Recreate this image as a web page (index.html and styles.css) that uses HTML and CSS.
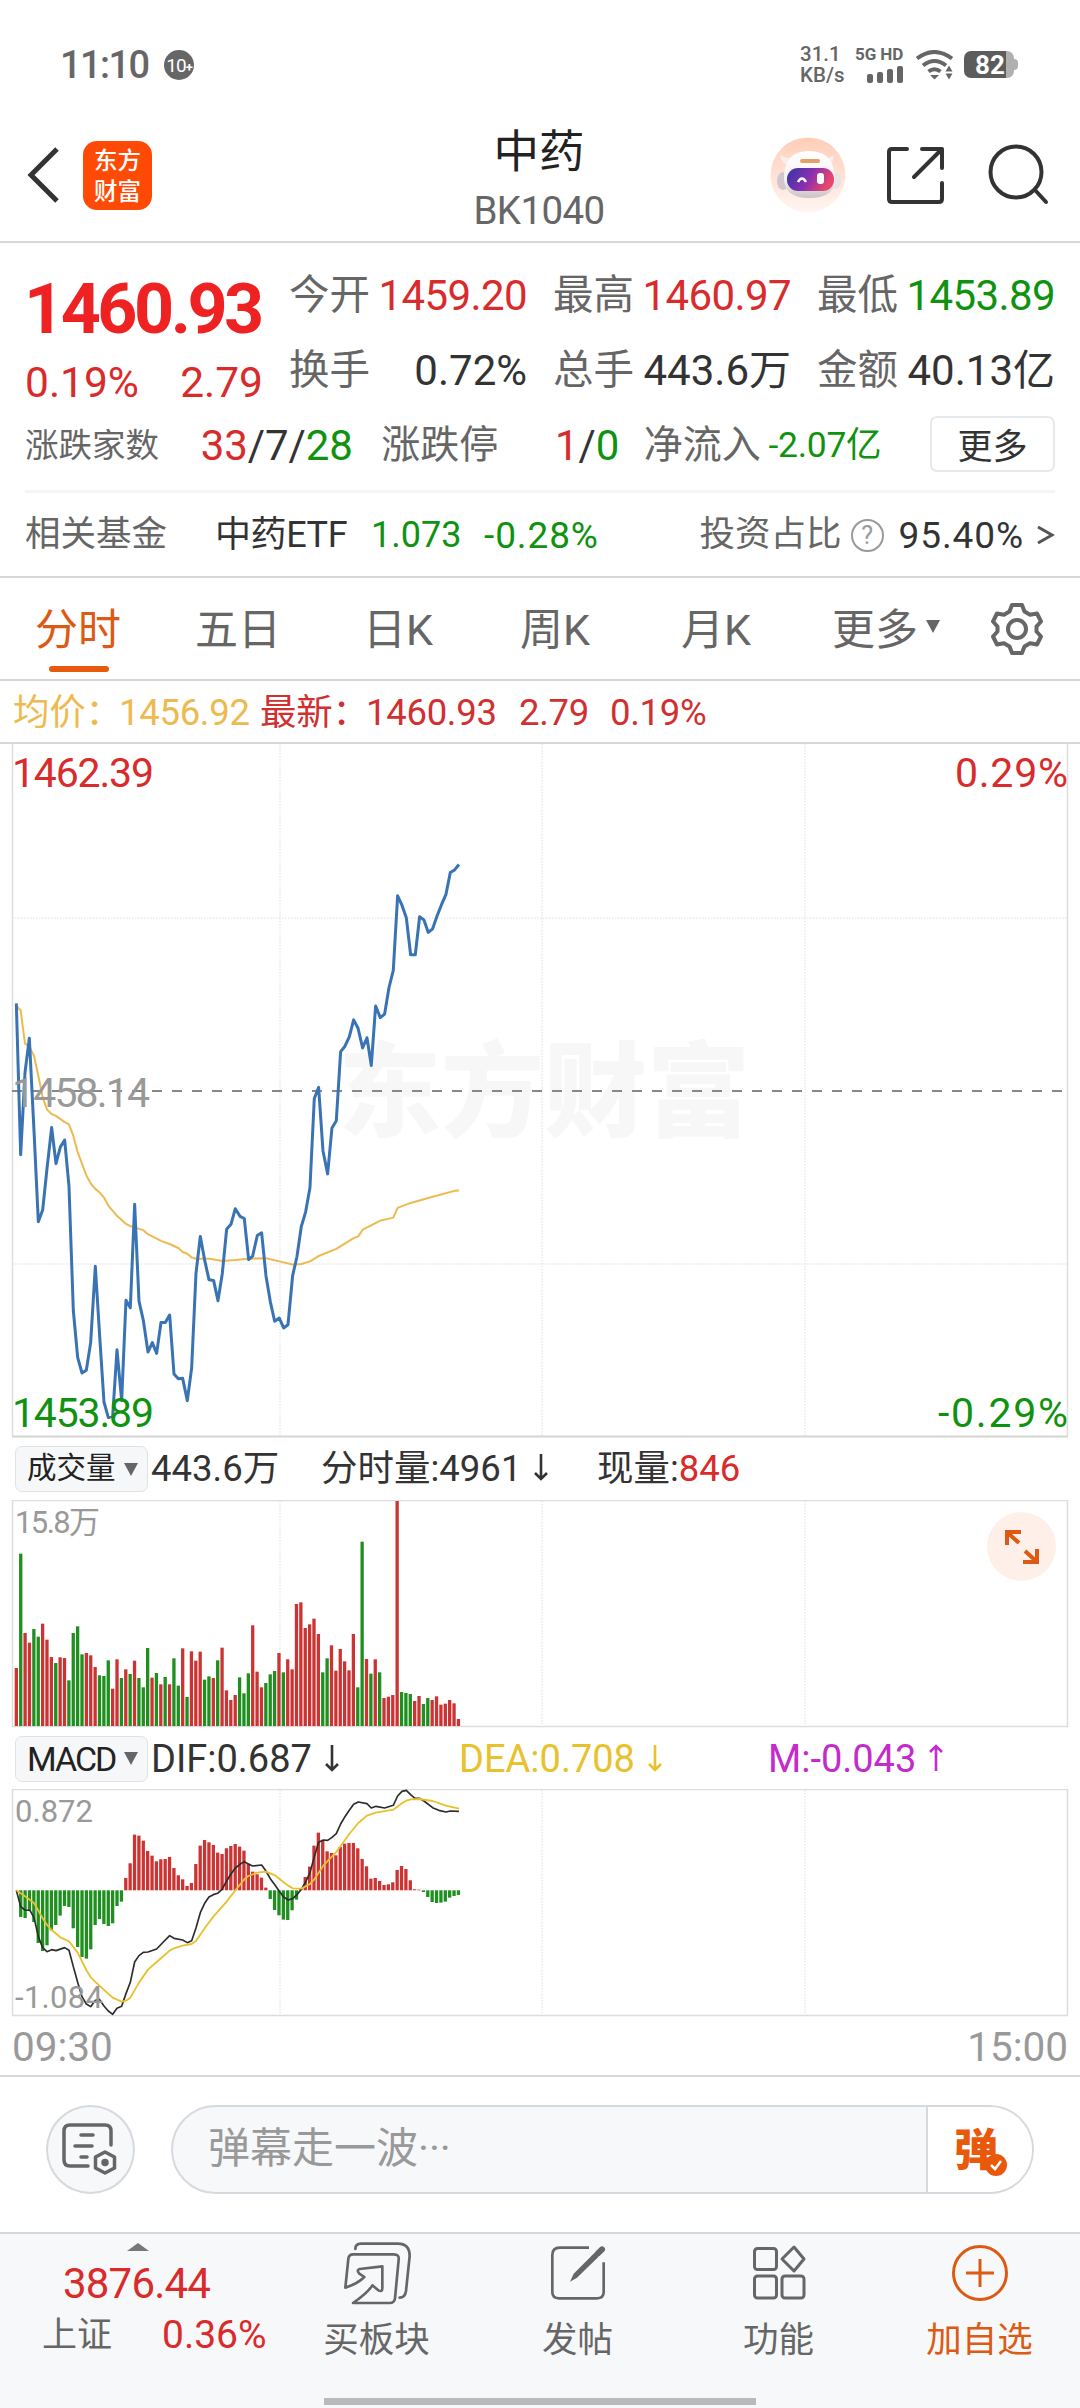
FILE: index.html
```html
<!DOCTYPE html>
<html lang="zh-CN">
<head>
  <meta charset="UTF-8" />
  <meta name="viewport" content="width=device-width, initial-scale=1.0" />
  <title>中药 BK1040</title>
  <link rel="stylesheet" href="styles.css">
</head>
<body>
  <div class="status-bar">
    <span class="clock">11:10</span>
    <span class="notice">10<i>+</i></span>
    <div class="net-speed"><span>31.1</span><span>KB/s</span></div>
    <div class="signal">
      <span>5G HD</span>
      <svg width="36" height="17" fill="#666"><rect x="0" y="8" width="6" height="9" rx="2"/><rect x="10" y="6" width="6" height="11" rx="2"/><rect x="20" y="3" width="6" height="14" rx="2"/><rect x="30" y="0" width="6" height="17" rx="2"/></svg>
    </div>
    <svg class="wifi" width="38" height="30" viewBox="0 0 38 30" fill="none" stroke="#666" stroke-width="4">
      <path d="M1 8.500Q18.500 -4.500 36 8.500"/><path d="M7 15.500Q18.500 6.500 30 15.500"/><path d="M12.500 21.500Q18.500 17 24.500 21.500"/>
      <path d="M14 25h9l-4.500 4.500zM29.500 21.500l3.500-6 3.500 6zM29.500 23.500l3.500 6 3.500-6z" fill="#666" stroke="none"/>
    </svg>
    <div class="battery"><span>82</span></div>
  </div>

  <header>
    <svg class="back" width="34" height="56" viewBox="0 0 34 56"><path d="M30 2L4 28l26 26" fill="none" stroke="#333" stroke-width="5"/></svg>
    <div class="logo"><span>东方</span><span>财富</span></div>
    <div class="title">
      <h1>中药</h1>
      <p>BK1040</p>
    </div>
    <svg class="robot" width="76" height="76" viewBox="0 0 76 76">
      <defs>
        <linearGradient id="halo" x1="0" y1="0" x2="0" y2="1"><stop offset="0" stop-color="#ffcdb8"/><stop offset="1" stop-color="#fff6f2"/></linearGradient>
        <linearGradient id="visor" x1="0" y1="0" x2="1" y2="0.3"><stop offset="0" stop-color="#3335a8"/><stop offset="0.55" stop-color="#8a2fb0"/><stop offset="1" stop-color="#e8476a"/></linearGradient>
        <linearGradient id="shell" x1="0" y1="0" x2="0" y2="1"><stop offset="0" stop-color="#fff"/><stop offset="0.6" stop-color="#f6f1f2"/><stop offset="1" stop-color="#c9c2c6"/></linearGradient>
      </defs>
      <circle cx="38" cy="38" r="37.500" fill="url(#halo)"/>
      <path d="M10 17q1 11 9 11l7-8q-11 3-16-3zM64 18q-1 10-8 10l-7-8q10 3 15-2z" fill="#f8eeec"/>
      <ellipse cx="13" cy="44" rx="6" ry="9" fill="#cfc7cb"/><ellipse cx="66" cy="44" rx="5" ry="8" fill="#e9e1e4"/>
      <path d="M14 41Q14 14 39 14Q64 14 65 41Q66 61 39 61Q14 61 14 41z" fill="url(#shell)"/>
      <rect x="30" y="22" width="20" height="4" rx="2" fill="#e6a067"/>
      <rect x="17" y="31" width="47" height="23" rx="11" fill="url(#visor)"/>
      <path d="M28 45q4-7 8 0" fill="none" stroke="#fff" stroke-width="2.500"/>
      <rect x="47" y="36" width="7" height="11" rx="3" fill="#fff"/>
    </svg>
    <svg class="share" width="60" height="60" viewBox="0 0 60 60" fill="none" stroke="#333" stroke-width="4" stroke-linecap="round" stroke-linejoin="round">
      <path d="M22 4H7Q4 4 4 7V54Q4 57 7 57H54Q57 57 57 54V38M37 4H57V23M57 4L29 32"/>
    </svg>
    <svg class="search" width="62" height="62" viewBox="0 0 62 62" fill="none" stroke="#333" stroke-width="4" stroke-linecap="round">
      <circle cx="29" cy="28" r="25.500"/><path d="M48 46L59 58"/>
    </svg>
  </header>

  <section class="quote">
    <div class="quote-main">
      <div class="price">
        <strong>1460.93</strong>
        <div class="change red"><span>0.19%</span><span>2.79</span></div>
      </div>
      <div class="stats">
        <div class="stat"><label>今开</label><b class="red">1459.20</b></div>
        <div class="stat"><label>最高</label><b class="red">1460.97</b></div>
        <div class="stat"><label>最低</label><b class="green">1453.89</b></div>
        <div class="stat"><label>换手</label><b>0.72%</b></div>
        <div class="stat"><label>总手</label><b>443.6万</b></div>
        <div class="stat"><label>金额</label><b>40.13亿</b></div>
      </div>
    </div>
    <div class="breadth">
      <label class="small">涨跌家数</label>
      <b><span class="red">33</span>/7/<span class="green">28</span></b>
      <label>涨跌停</label>
      <b><span class="red">1</span>/<span class="green">0</span></b>
      <label>净流入</label>
      <b class="flow green">-2.07亿</b>
      <button>更多</button>
    </div>
    <div class="fund">
      <label>相关基金</label>
      <span class="fund-name">中药ETF</span>
      <span class="green fund-price">1.073</span>
      <span class="green wide">-0.28%</span>
      <label class="ratio">投资占比</label>
      <span class="help">?</span>
      <span class="wide">95.40%</span>
      <svg width="19" height="20" viewBox="0 0 19 20"><path d="M2 2l14 8-14 8" fill="none" stroke="#555" stroke-width="3"/></svg>
    </div>
  </section>

  <nav class="tabs">
    <a class="active">分时</a>
    <a>五日</a>
    <a>日K</a>
    <a>周K</a>
    <a>月K</a>
    <a class="more">更多<i class="caret"></i></a>
    <svg width="54" height="54" viewBox="0 0 54 54" fill="none" stroke="#666" stroke-width="4" stroke-linejoin="round">
      <path d="M22 3h10l2.500 6.500 5.500 3.200 7-1.200 4 8-4.500 5v5l4.500 5-4 8-7-1.200-5.500 3.200L32 51H22l-2.500-6.500-5.500-3.200-7 1.200-4-8 4.500-5v-5L3 19.500l4-8 7 1.200 5.500-3.200z"/><circle cx="27" cy="27" r="9"/>
    </svg>
  </nav>

  <div class="legend">
    <span class="avg">均价：</span><span class="avg v1">1456.92</span><span class="v2">最新：</span><span class="v3">1460.93</span><span class="v4">2.79</span><span>0.19%</span>
  </div>

  <svg class="chart main-chart" width="1080" height="695" viewBox="0 743 1080 695">
    <text x="338" y="1129" class="watermark" textLength="412">东方财富</text>
    <g class="grid"><path d="M280 744V1436M542 744V1436M805 744V1436M12 918H1068M12 1264H1068"/></g>
    <path d="M12.500 743V1436M1067.500 743V1436" stroke="#ddd" stroke-width="1.500"/><path d="M12 1436.500H1068" stroke="#d5d5d5" stroke-width="2"/>
    <path d="M12 1091H1068" stroke="#888" stroke-width="2" stroke-dasharray="10 10"/>
    <g transform="translate(0 740) scale(.3333 .4464)" fill="none" stroke-linejoin="round">
      <polyline stroke="#edba50" stroke-width="2" vector-effect="non-scaling-stroke" points="49,595 62,606 75,680 88,687 102,708 115,752 128,800 141,828 155,838 168,842 194,856 207,861 220,887 233,923 259,975 272,993 285,1005 298,1013 312,1025 325,1043 351,1066 378,1084 391,1089 430,1098 444,1107 483,1122 509,1129 535,1138 548,1147 562,1151 575,1159 588,1162 630,1162 667,1167 706,1165 745,1162 798,1161 838,1168 878,1175 904,1174 930,1168 956,1156 1009,1140 1061,1116 1075,1112 1088,1097 1140,1077 1180,1070 1193,1048 1232,1037 1298,1023 1364,1010 1377,1009"/>
      <polyline stroke="#3973b3" stroke-width="3" vector-effect="non-scaling-stroke" points="49,590 62,929 75,745 88,668 102,875 115,1079 128,1053 141,960 155,868 168,949 181,912 194,896 207,1000 220,1278 233,1383 246,1418 259,1412 272,1350 286,1179 299,1335 312,1483 325,1518 338,1515 351,1366 365,1480 378,1255 391,1272 404,1040 417,1257 430,1300 444,1371 457,1350 470,1374 483,1305 496,1305 509,1288 522,1420 535,1431 548,1430 562,1480 575,1407 588,1195 601,1112 614,1165 627,1209 641,1211 654,1256 667,1195 680,1096 693,1085 706,1050 720,1067 733,1072 746,1164 758,1156 772,1110 785,1104 798,1200 811,1258 824,1302 838,1295 851,1317 864,1310 878,1200 891,1157 904,1090 917,1057 930,1003 943,803 956,778 969,920 983,972 996,869 1009,853 1022,698 1035,686 1048,665 1061,627 1074,645 1088,690 1101,667 1114,729 1127,596 1141,622 1154,614 1167,555 1180,516 1193,349 1206,370 1219,398 1232,481 1246,481 1259,396 1272,403 1285,431 1298,423 1311,395 1324,370 1338,346 1351,297 1364,291 1377,279"/>
    </g>
    <g class="axis">
      <text x="12" y="787" fill="#d92b2b" textLength="142">1462.39</text>
      <text x="12" y="1107" fill="#999" textLength="138">1458.14</text>
      <text x="12" y="1427" fill="#0f920f" textLength="142">1453.89</text>
      <text x="955" y="787" fill="#d92b2b" textLength="113">0.29%</text>
      <text x="938" y="1427" fill="#0f920f" textLength="130">-0.29%</text>
    </g>
  </svg>

  <div class="indicator volume">
    <span class="picker"><em>成交量</em><i class="caret"></i></span>
    <span class="c1">443.6万</span>
    <span class="c2">分时量:4961<svg width="16" height="28"><use href="#down"/></svg></span>
    <span>现量:<b class="red">846</b></span>
  </div>

  <div class="panel">
    <svg class="chart" width="1080" height="228" viewBox="0 1500 1080 228">
      <g class="grid"><path d="M280 1501V1726M542 1501V1726M805 1501V1726"/></g>
      <rect x="12.500" y="1500.500" width="1055" height="226" fill="none" stroke="#ddd" stroke-width="1.500"/>
      <text x="15" y="1533" class="mini" textLength="85">15.8万</text>
      <g id="volumeBars"></g>
    </svg>
    <div class="expand">
      <svg width="34" height="34" viewBox="0 0 34 34" fill="none" stroke="#dc5a14" stroke-width="4"><path d="M2 15V2H16M3 3L14 13M32 19V32H18M31 31L20 21"/></svg>
    </div>
  </div>

  <div class="indicator macd">
    <span class="picker"><em>MACD</em><i class="caret"></i></span>
    <span class="c1">DIF:0.687<svg width="16" height="28"><use href="#down"/></svg></span>
    <span class="c2">DEA:0.708<svg width="16" height="28"><use href="#down"/></svg></span>
    <span class="c3">M:-0.043<svg width="16" height="28"><use href="#up"/></svg></span>
  </div>

  <svg class="chart" width="1080" height="228" viewBox="0 1789 1080 228">
    <g class="grid"><path d="M280 1790V2015M542 1790V2015M805 1790V2015"/></g>
    <rect x="12.500" y="1789.500" width="1055" height="226" fill="none" stroke="#ddd" stroke-width="1.500"/>
    <g id="macdBars"></g>
    <g transform="translate(0 1730) scale(.3333)" fill="none" stroke-linejoin="round">
      <polyline stroke="#2c2c2c" stroke-width="5" points="49,481 62,530 75,540 90,541 102,563 115,620 128,653 141,665 155,659 168,662 194,653 207,661 220,710 233,757 246,800 259,822 272,830 285,812 298,808 312,828 325,843 338,853 351,835 365,829 378,791 391,757 404,696 417,677 430,667 444,666 470,657 490,636 509,617 522,625 548,630 562,638 575,632 588,594 601,548 614,520 627,501 640,494 653,490 666,478 680,453 693,432 706,414 720,403 733,395 745,402 758,408 785,405 798,423 811,446 825,465 838,484 851,501 865,510 878,506 891,494 904,478 917,456 930,428 943,380 956,337 970,330 983,331 996,322 1009,311 1022,282 1035,260 1048,241 1061,223 1075,216 1101,221 1114,234 1128,229 1154,234 1180,226 1193,198 1206,184 1219,181 1232,194 1245,205 1258,205 1272,213 1298,233 1320,242 1338,246 1351,243 1377,244"/>
      <polyline stroke="#e8c12c" stroke-width="5.500" points="49,481 75,499 102,519 128,565 141,585 155,600 181,622 207,634 233,668 259,720 272,742 298,767 338,803 365,815 378,812 391,803 417,758 444,719 483,685 509,662 522,655 548,647 575,642 588,633 614,595 640,560 680,515 706,481 733,448 745,438 771,428 798,425 825,436 851,457 865,467 878,475 904,476 930,462 943,448 970,407 1009,366 1048,312 1075,279 1101,257 1128,248 1180,239 1206,220 1219,212 1232,208 1258,207 1298,213 1338,227 1377,236"/>
    </g>
    <text x="15" y="1822" class="mini" textLength="78">0.872</text>
    <text x="15" y="2008" class="mini" textLength="88">-1.084</text>
  </svg>

  <div class="times"><span>09:30</span><span>15:00</span></div>

  <div class="comment">
    <div class="settings">
      <svg width="58" height="54" viewBox="0 0 58 54" fill="none" stroke="#666" stroke-width="3.500" stroke-linecap="round">
        <path d="M27 44H9Q3 44 3 38V9Q3 3 9 3H44Q50 3 50 9V23M20 13H32M14 24H31M20 35H26"/>
        <path d="M44 30l9.500 5v11L44 51l-9.500-5V35z" stroke-linejoin="round"/><circle cx="44" cy="40.500" r="2" fill="#666"/>
      </svg>
    </div>
    <div class="input">
      <span>弹幕走一波···</span>
      <div class="danmu">弹<svg width="24" height="24" viewBox="0 0 24 24"><circle cx="12" cy="12" r="11" fill="#e8590c"/><path d="M7 12l4 4 6-8" fill="none" stroke="#fff" stroke-width="2.500"/></svg></div>
    </div>
  </div>

  <footer>
    <div class="index red">
      <i></i>
      <b>3876.44</b>
      <p><span>上证</span><b>0.36%</b></p>
    </div>
    <a>
      <svg width="72" height="64" viewBox="0 0 216 192" fill="none" stroke="#666" stroke-width="8" stroke-linejoin="round" stroke-linecap="round">
        <path d="M43 24Q43 8 60 8H170Q206 8 206 45L195 150Q192 170 176 170"/>
        <path d="M13 140L22 54Q23 40 37 40H158Q175 40 173 56L162 172Q160 186 146 186H36Q80 156 94 133L112 148Q124 154 124 142V76L56 84Q46 86 54 97L70 108Q50 128 13 140z"/>
      </svg>
      买板块
    </a>
    <a>
      <svg width="60" height="64" viewBox="0 0 180 192" fill="none" stroke="#666" stroke-width="8">
        <path d="M123 20H35Q13 20 13 42V154Q13 172 33 172H147Q167 172 167 154V64"/>
        <path d="M66 122L77 98 139 36 151 48 87 110z" fill="#666" stroke="none"/><path d="M149 38L162 25" stroke-width="18" stroke-linecap="round"/>
      </svg>
      发帖
    </a>
    <a>
      <svg width="56" height="64" viewBox="0 0 56 64" fill="none" stroke="#666" stroke-width="3">
        <rect x="3.500" y="7.500" width="22" height="21" rx="3"/><rect x="3.500" y="35" width="22" height="22" rx="3"/><rect x="31" y="35" width="22" height="22" rx="3"/>
        <path d="M43 6L53 18 43 30 31 18z" stroke-linejoin="round"/>
      </svg>
      功能
    </a>
    <a class="add">
      <svg width="60" height="64" viewBox="0 0 60 64" fill="none" stroke="#dc5a14" stroke-width="3"><circle cx="30" cy="32" r="26.500"/><path d="M16 32H44M30 18V46"/></svg>
      加自选
    </a>
  </footer>
  <div class="home-bar"></div>

  <svg width="0" height="0" class="defs">
    <symbol id="down" viewBox="0 0 16 28"><path d="M8 1V26M2 20l6 6 6-6" fill="none" stroke="currentColor" stroke-width="2.600"/></symbol>
    <symbol id="up" viewBox="0 0 16 28"><path d="M8 27V2M2 8l6-6 6 6" fill="none" stroke="currentColor" stroke-width="2.600"/></symbol>
  </svg>

  <script>
    const RED = '#cc3333', GREEN = '#1f8f1f';
    const X0 = 16.3, STEP = 4.377;

    // one value per minute, negative = price fell in that minute
    const volume = [174,-517,279,250,-291,-268,307,259,207,-189,206,204,-137,-279,-299,-215,219,212,177,-152,-150,-197,112,200,-144,170,-156,196,-144,-116,-234,145,-159,125,-147,125,-203,-121,233,-87,224,196,223,-139,-149,144,-197,235,107,78,93,-146,-98,-158,302,163,116,-129,-155,-165,219,-161,200,170,366,371,294,305,322,276,-161,-203,242,166,231,194,167,276,-116,-553,201,-157,200,-161,84,88,93,675,-102,-99,-96,75,90,-66,-84,78,89,64,67,78,68,21];
    const macd = [0,-80,-83,-62,-95,-158,-182,-165,-120,-104,-76,-47,-50,-114,-170,-200,-205,-177,-104,-86,-101,-107,-99,-47,-34,37,81,167,164,149,118,104,87,93,94,100,67,45,33,13,22,79,134,151,144,136,113,109,126,133,139,131,119,80,56,48,38,8,-26,-59,-75,-88,-89,-60,-28,7,40,71,134,173,150,117,112,105,130,140,142,142,126,94,72,35,37,28,16,18,24,61,73,64,30,3,2,-5,-20,-35,-38,-37,-34,-22,-17,-14];

    function drawBars(id, data, base, signed) {
      document.getElementById(id).innerHTML = data.map((v, i) => {
        const h = Math.abs(v) / 3;
        const y = signed && v < 0 ? base : base - h;
        return `<rect x="${(X0 + i * STEP - 1.6).toFixed(2)}" y="${y.toFixed(2)}" width="3.3" height="${h.toFixed(2)}" fill="${v < 0 ? GREEN : RED}"/>`;
      }).join('');
    }

    drawBars('volumeBars', volume, 1726, false);
    drawBars('macdBars', macd, 1890.3, true);
  </script>
</body>
</html>
```

FILE: styles.css
```css
:root {
  --red: #d92b2b;
  --green: #0f920f;
  --orange: #e8590c;
  --gray: #666;
  --line: #d6d7d9;
}
* {
  margin: 0; padding: 0; box-sizing: border-box;
}
body {
  width: 1080px;
  height: 2408px;
  overflow: hidden;
  background: #fff;
  color: #333;
  font-family: Roboto, "Noto Sans CJK SC", sans-serif;
  font-size: 36px;
  line-height: 1;
}
svg { display: block; flex: none; }
i, em { font-style: normal; }
b { font-weight: 400; }
span, label, b, a { white-space: nowrap; }
.red { color: var(--red); }
.green { color: var(--green); }
.defs { position: absolute; }

.status-bar {
  display: flex;
  align-items: center;
  height: 129px;
  padding: 0 60px;
  color: var(--gray);
}
.clock { font-size: 38px; width: 104px; font-weight: 500; letter-spacing: -1.6px; }
.notice {
  width: 30px; height: 30px;
  border-radius: 50%;
  background: var(--gray);
  color: #fff;
  font-size: 19px;
  line-height: 31px;
  text-align: center;
  letter-spacing: -1px;
}
.notice i { font-size: 13px; font-weight: 700; }
.net-speed {
  display: flex;
  flex-direction: column;
  gap: 1px;
  margin-left: 606px;
  width: 55px;
  font-size: 20.5px;
  font-weight: 500;
}
.signal { font-size: 17px; font-weight: 700; width: 61px; }
.signal span { display: block; margin-bottom: 3px; letter-spacing: -0.1px; }
.signal svg { margin-left: 12px; }
.battery {
  display: flex;
  margin-left: 10px;
  width: 50px; height: 27px;
  border-radius: 7px;
  background: linear-gradient(90deg, #5c5c5c 42px, #b0b0b0 42px);
  color: #fff;
  font-size: 26px;
  font-weight: 700;
  line-height: 28px;
  padding-left: 11px;
  position: relative;
}
.battery::after {
  content: "";
  position: absolute;
  right: -4px; top: 8px;
  width: 4px; height: 11px;
  border-radius: 0 4px 4px 0;
  background: #b0b0b0;
}

header {
  display: flex;
  align-items: center;
  height: 114px;
  padding: 0 28px 20px 27px;
  border-bottom: 2px solid var(--line);
}
.logo {
  display: flex;
  flex-direction: column;
  align-items: center;
  justify-content: center;
  width: 69px; height: 69px;
  margin-left: 22px;
  border-radius: 14px;
  background: #ff4a05;
  color: #fff;
  font: 500 23.5px/31px "Noto Sans CJK SC", sans-serif;
}
.title { width: 240px; margin: 8px 0 0 267px; text-align: center; }
.title h1 { font-size: 45.500px; font-weight: 400; line-height: 64px; color: #222; }
.title p { font-size: 38.500px; line-height: 52px; color: var(--gray); letter-spacing: -0.6px; }
.robot { margin-left: 111px; }
.share { margin-left: 39px; }
.search { margin-left: 42px; }

.quote { height: 335px; padding: 0 25px; border-bottom: 2px solid var(--line); }
.quote-main { display: flex; height: 160px; }
.price { width: 264px; padding-top: 33px; }
.price strong { display: block; font-size: 70px; line-height: 66px; letter-spacing: -3.5px; margin-left: -1px; color: #ee2222; }
.change { display: flex; justify-content: space-between; width: 238px; margin-top: 20px; font-size: 42.500px; }
.stats {
  display: grid;
  grid-template-columns: repeat(3, 238px);
  grid-auto-rows: 75px;
  column-gap: 26px;
  padding-top: 15px;
}
.stat { display: flex; justify-content: space-between; align-items: center; }
label { color: var(--gray); font-size: 40.5px; }
.stat b { font-size: 42px; letter-spacing: -0.6px; }
.stat:nth-child(n+4) b { letter-spacing: 0; }
.breadth { display: flex; align-items: center; height: 90px; padding-bottom: 2px; border-bottom: 3px solid #f4f5f6; }
.breadth b { font-size: 42px; letter-spacing: -0.1px; }
.breadth label { font-size: 39px; }
.breadth label.small { font-size: 33.500px; width: 176px; }
.breadth b:nth-of-type(1) { width: 181px; }
.breadth label:nth-of-type(2) { width: 174px; }
.breadth b:nth-of-type(2) { width: 89px; }
.breadth label:nth-of-type(3) { width: 125px; }
.breadth b.flow { font-size: 35.500px; width: 162px; letter-spacing: -0.3px; }
.breadth button {
  width: 125px; height: 56px;
  margin-top: -4px;
  border: 2px solid #e6e9ec;
  border-radius: 7px;
  background: #fff;
  color: #333;
  font: 35px/50px "Noto Sans CJK SC", sans-serif;
}
.fund { display: flex; align-items: center; height: 84px; font-size: 36px; }
.fund label { font-size: 35.500px; width: 190px; }
.fund-name { width: 156px; letter-spacing: -0.4px; }
.fund-price { width: 113px; }
.fund .wide { letter-spacing: 0.9px; font-size: 37px; }
.fund .ratio { margin-left: auto; width: 151px; }
.fund svg { margin-left: 12px; }
.help {
  width: 33px; height: 33px;
  margin-right: 15px;
  border: 2.500px solid #999;
  border-radius: 50%;
  color: #999;
  font-size: 25px;
  line-height: 29px;
  text-align: center;
}

.tabs {
  display: grid;
  grid-template-columns: 160px 168px 157px 161px 151px 158px 54px;
  align-items: center;
  height: 103px;
  padding-left: 35px;
  border-bottom: 2px solid var(--line);
  color: var(--gray);
  font-size: 43px;
}
.tabs a { display: flex; align-items: center; height: 101px; position: relative; padding-top: 3px; }
.tabs .active { color: #dc5a14; }
.tabs .active::after {
  content: "";
  position: absolute;
  left: 14px; bottom: 7px;
  width: 60px; height: 6px;
  border-radius: 3px;
  background: var(--orange);
}
.caret {
  display: inline-block;
  border: 7.500px solid transparent;
  border-top: 13px solid var(--gray);
  border-bottom: 0;
}
.more .caret { margin: -8px 0 0 8px; }

.legend {
  display: flex;
  align-items: center;
  height: 63px;
  padding: 3px 0 0 13px;
  border-bottom: 2px solid var(--line);
  color: #d03030;
  font-size: 36.500px;
  letter-spacing: -0.3px;
}
.legend .avg { color: #edba50; width: 106px; }
.legend .v1 { width: 141px; }
.legend .v2 { width: 106px; }
.legend .v3 { width: 153px; }
.legend .v4 { width: 91px; }

.main-chart { margin-top: -1px; }
.chart text { font-family: Roboto, "Noto Sans CJK SC", sans-serif; }
.chart .watermark { font: 900 103px "Noto Sans CJK SC", sans-serif; fill: #f7f7f7; }
.grid path { stroke: #dedede; stroke-width: 1; stroke-dasharray: 1.5 1.5; fill: none; }
.axis text { font-size: 41px; }
.chart .mini { font-size: 31px; fill: #999; }

.indicator {
  display: flex;
  align-items: center;
  height: 61px;
  padding-left: 15px;
  font-size: 38px;
}
.volume { height: 62px; font-size: 36.500px; }
.indicator svg { display: inline-block; margin-left: 12px; }
.picker {
  display: flex;
  align-items: center;
  justify-content: space-between;
  width: 133px; height: 46px;
  margin-right: 3px;
  padding: 0 9px 0 11px;
  border: 1.500px solid #e0e2e6;
  border-radius: 7px;
  background: #f6f7f9;
  color: #222;
  font-size: 29.500px;
}
.volume .c1 { width: 170px; }
.volume .c2 { width: 276px; }
.macd em { font-size: 34px; letter-spacing: -2px; }
.macd .c1 { width: 308px; }
.macd .c2 { width: 309px; color: #e8c12c; }
.macd .c3 { color: #c32bcb; }
.panel { position: relative; }
.expand {
  position: absolute;
  left: 987px; top: 12px;
  display: flex;
  align-items: center;
  justify-content: center;
  width: 69px; height: 69px;
  border-radius: 50%;
  background: #fef0e8;
}

.times {
  display: flex;
  justify-content: space-between;
  align-items: center;
  height: 60px;
  padding: 3px 12px 0;
  border-bottom: 2px solid var(--line);
  color: #999;
  font-size: 40.500px;
}

.comment { display: flex; align-items: center; height: 155px; padding: 0 46px 11px; }
.settings {
  display: flex;
  align-items: center;
  justify-content: center;
  width: 89px; height: 89px;
  border: 2px solid #d6d9dd;
  border-radius: 50%;
  background: #f7f8fa;
}
.input {
  display: flex;
  align-items: center;
  justify-content: space-between;
  width: 864px; height: 89px;
  margin-left: 36px;
  padding-left: 35px;
  border: 2px solid #d6d9dd;
  border-radius: 45px;
  background: #f7f8fa;
  overflow: hidden;
  color: #999;
  font-size: 42px;
}
.danmu {
  position: relative;
  width: 106px; height: 89px;
  padding-left: 26px;
  border-left: 2px solid #d6d9dd;
  background: #fff;
  color: var(--orange);
  font: 900 44px/84px "Noto Sans CJK SC", sans-serif;
}
.danmu svg { position: absolute; left: 56px; top: 48px; }

footer {
  display: flex;
  height: 166px;
  border-top: 2px solid var(--line);
  background: #f7f8fa;
}
footer a {
  display: flex;
  flex-direction: column;
  align-items: center;
  width: 201px;
  padding-top: 7px;
  color: var(--gray);
  font-size: 35.500px;
}
footer a svg { margin-bottom: 18px; }
footer .add { color: #dc5a14; }
.index { display: flex; flex-direction: column; width: 276px; font-size: 42px; }
.index i {
  margin: 9px 0 12px 127px;
  width: 0;
  border: 11px solid transparent;
  border-bottom: 8px solid #777;
  border-top: 0;
}
.index > b { padding-left: 63px; letter-spacing: -0.8px; }
.index p { display: flex; align-items: center; margin-top: 11px; padding-left: 42px; font-size: 39px; }
.index p span { width: 120px; color: var(--gray); font-size: 35px; }
.home-bar {
  height: 10px;
  background: linear-gradient(#bababd, #bababd) center top / 432px 7px no-repeat #f7f8fa;
}
```
